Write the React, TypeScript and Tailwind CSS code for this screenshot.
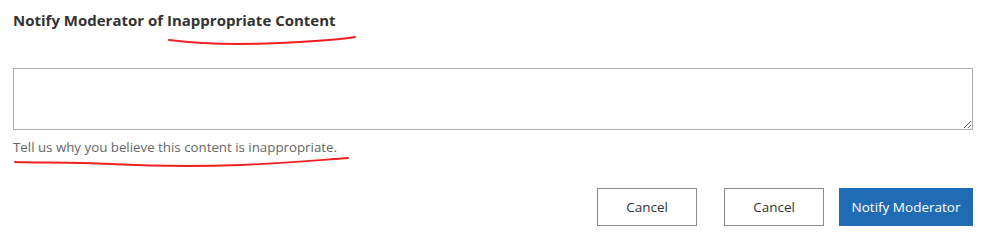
export default function App() {
  return (
    <div className="relative w-[986px] h-[243px] bg-white text-[#333]" style={{ fontFamily: '"Segoe UI", "Open Sans", sans-serif' }}>
      <div className="px-[13px] pt-[10px]">
        <h2 className="text-[15px] font-bold leading-[20px] text-[#333]">
          Notify Moderator of Inappropriate Content
        </h2>
        <textarea className="mt-[38px] block w-[960px] h-[62px] border border-[#ababab] outline-none resize-y" />
        <p className="mt-[7px] text-[13.3px] leading-[20px] text-[#666]">
          Tell us why you believe this content is inappropriate.
        </p>
        <div className="mt-[31px] flex justify-end w-[960px]">
          <button className="w-[100px] h-[38px] border border-[#8a8a8a] text-[13.5px] text-[#333] bg-white">Cancel</button>
          <button className="ml-[27px] w-[100px] h-[38px] border border-[#8a8a8a] text-[13.5px] text-[#333] bg-white">Cancel</button>
          <button className="ml-[15px] w-[134px] h-[38px] bg-[#1f6cb5] text-[13.5px] text-white">Notify Moderator</button>
        </div>
      </div>
      <svg className="absolute left-0 top-0 pointer-events-none" width="986" height="243">
        <path d="M169 40 C 200 44, 240 45, 280 43 S 340 40, 355 37" stroke="#f02020" strokeWidth="1.9" fill="none" strokeLinecap="round" />
        <path d="M15 162 C 40 163, 70 162, 110 164 S 190 167, 240 165 S 320 160, 348 158" stroke="#f02020" strokeWidth="1.9" fill="none" strokeLinecap="round" />
      </svg>
    </div>
  )
}
